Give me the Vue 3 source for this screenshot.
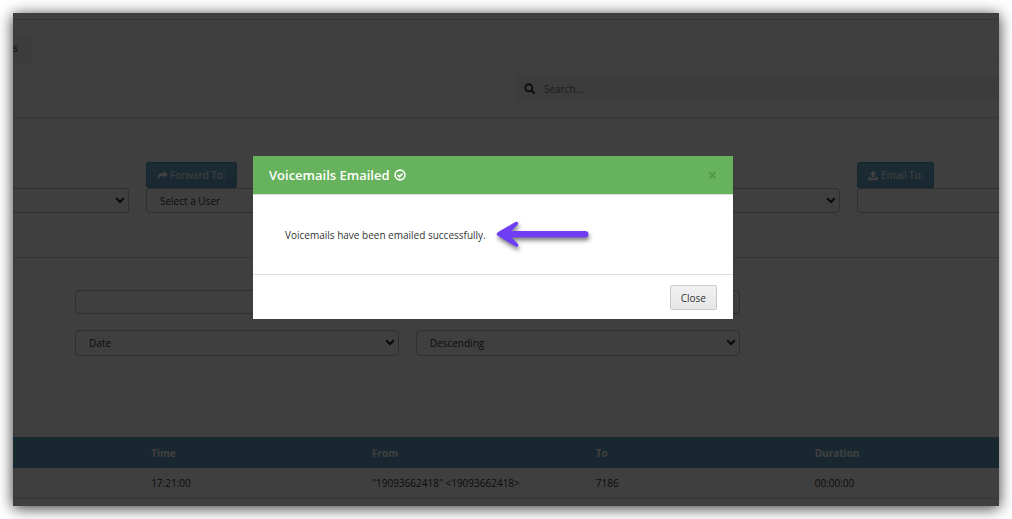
<script setup>
import { ref } from 'vue'

const forwardUser = ref('user')
const sortBy = ref('date')
const order = ref('desc')
const open = ref(true)

const columns = ['', 'Time', 'From', 'To', 'Duration']
const rows = [['', '17:21:00', '"19093662418" <19093662418>', '7186', '00:00:00']]
</script>

<template>
  <div class="window">
    <div class="page">
      <div class="topbar"></div>
      <nav class="tabs"><a class="tab" href="#">s</a></nav>
      <div class="search-row">
        <label class="search">
          <svg class="icon" viewBox="0 0 12 12" aria-hidden="true">
            <circle cx="4.800" cy="4.800" r="3.500" fill="none" stroke="currentColor" stroke-width="1.900" />
            <path d="M7.500 7.500 10 10" stroke="currentColor" stroke-width="2.100" stroke-linecap="round" />
          </svg>
          <input type="search" placeholder="Search..." aria-label="Search" />
        </label>
      </div>

      <section class="actions">
        <div class="field first">
          <div class="select">
            <select aria-label="Action"><option></option></select>
            <svg class="chevron" viewBox="0 0 10 7" aria-hidden="true"><path d="M1.200 1.300 5 5 8.800 1.300" /></svg>
          </div>
        </div>
        <div class="field">
          <button class="primary" type="button">
            <svg class="glyph" viewBox="0 0 12 12" aria-hidden="true">
              <path d="M7.200 1.200 11.800 4.900 7.200 8.500V6.500C4.200 6.300 2.200 7 1.700 10.800.2 8.400-.2 3.200 7.200 3.200Z" fill="currentColor" />
            </svg>
            Forward To:
          </button>
          <div class="select">
            <select v-model="forwardUser" aria-label="Forward to">
              <option value="user">Select a User</option>
            </select>
          </div>
        </div>
        <div class="field">
          <div class="select">
            <select aria-label="Folder"><option></option></select>
            <svg class="chevron" viewBox="0 0 10 7" aria-hidden="true"><path d="M1.200 1.300 5 5 8.800 1.300" /></svg>
          </div>
        </div>
        <div class="field last">
          <button class="primary" type="button">
            <svg class="glyph" viewBox="0 0 12 12" aria-hidden="true">
              <path d="M5.500 .8 9.200 4.600H7V8H4V4.600H1.800ZM.8 8H3.200V9H7.800V8H10.200Q11 8 11 8.700V10.700Q11 11.300 10.300 11.300H.7Q0 11.300 0 10.700V8.700Q0 8 .8 8Z" fill="currentColor" />
            </svg>
            Email To:
          </button>
          <input class="text" type="email" aria-label="Email to" />
        </div>
      </section>

      <section class="filters">
        <input class="text wide" type="text" aria-label="Filter" />
        <div class="select">
          <select v-model="sortBy" aria-label="Sort by"><option value="date">Date</option></select>
          <svg class="chevron" viewBox="0 0 10 7" aria-hidden="true"><path d="M1.200 1.300 5 5 8.800 1.300" /></svg>
        </div>
        <div class="select">
          <select v-model="order" aria-label="Order"><option value="desc">Descending</option></select>
          <svg class="chevron" viewBox="0 0 10 7" aria-hidden="true"><path d="M1.200 1.300 5 5 8.800 1.300" /></svg>
        </div>
      </section>

      <table>
        <colgroup>
          <col class="c-lead" /><col class="c-time" /><col class="c-from" /><col class="c-to" /><col />
        </colgroup>
        <thead>
          <tr><th v-for="c in columns" :key="c" scope="col">{{ c }}</th></tr>
        </thead>
        <tbody>
          <tr v-for="(r, i) in rows" :key="i"><td v-for="(v, j) in r" :key="j">{{ v }}</td></tr>
        </tbody>
      </table>
    </div>

    <div v-if="open" class="backdrop">
      <div class="modal" role="dialog" aria-modal="true" aria-labelledby="dialog-title">
        <header>
          <h2 id="dialog-title">
            Voicemails Emailed
            <svg class="check" viewBox="0 0 12 12" aria-hidden="true">
              <circle cx="6" cy="6" r="4.900" fill="none" stroke="currentColor" stroke-width="1.600" />
              <path d="M3.600 5.900 5.400 7.700 8.500 4.600" fill="none" stroke="currentColor" stroke-width="1.700" />
            </svg>
          </h2>
          <button class="dismiss" type="button" aria-label="Dismiss" @click="open = false">×</button>
        </header>
        <div class="body">
          <p>Voicemails have been emailed successfully.</p>
          <svg class="arrow" viewBox="0 0 98 32" aria-hidden="true">
            <path d="M1.500 15 Q2 13.500 4 12.500L20 3.200Q22.500 2.200 23.200 4 23.500 5 22.500 6L16.500 12H90Q93.500 12 93.500 15.200T90 18.500H16.500L22.500 24.500Q23.800 26 23 27.200 22 28.500 20 27.300L4 17.600Q2 16.600 1.500 15Z" fill="#6f3df4" />
          </svg>
        </div>
        <footer><button class="close" type="button" @click="open = false">Close</button></footer>
      </div>
    </div>
  </div>
</template>

<style>
body {
  background: #fff;
}
</style>

<style scoped>
* {
  box-sizing: border-box;
}
.window {
  position: relative;
  margin: 13px;
  overflow: hidden;
  box-shadow: 0 2px 14px rgba(0, 0, 0, 0.8);
  font: 10px/16px "Open Sans", sans-serif;
  color: #333;
}
.page {
  background: #fcfcfc;
  padding-bottom: 7px;
}
button,
input,
select {
  font: inherit;
  color: inherit;
  margin: 0;
}
.topbar {
  height: 7px;
  border-bottom: 1px solid #d8d8d8;
}
.tabs {
  display: flex;
  padding-top: 14px;
  height: 43px;
  border-bottom: 1px solid #f0f0f0;
}
.tab {
  width: 19px;
  height: 28px;
  line-height: 28px;
  background: #f0f0f0;
  color: #333;
  text-decoration: none;
}
.search-row {
  display: flex;
  justify-content: flex-end;
  padding: 13px 0 16px;
  border-bottom: 1px solid #dcdcdc;
}
.search {
  display: flex;
  align-items: center;
  gap: 8px;
  width: 49%;
  height: 25px;
  padding-left: 8px;
  background: #f0f0f0;
  border-radius: 3px 0 0 3px;
}
.icon {
  width: 12px;
  height: 12px;
  color: #333;
}
.search input {
  flex: 1;
  border: 0;
  padding: 0;
  background: none;
}
.search input::placeholder {
  color: #777;
  opacity: 1;
}
.actions {
  display: grid;
  grid-template-columns: 116fr 339fr 338fr 142fr;
  gap: 17px;
  align-items: end;
  padding: 44px 0;
  border-bottom: 1px solid #d0d0d0;
}
.field {
  min-width: 0;
}
.primary {
  display: flex;
  align-items: center;
  gap: 2px;
  height: 26px;
  padding: 0 10px;
  border: 1px solid #5a98b8;
  border-radius: 2px;
  background: linear-gradient(#70b0cc, #64a0c0);
  color: #fff;
}
.glyph {
  width: 11px;
  height: 11px;
}
.select {
  position: relative;
}
select,
.text {
  display: block;
  width: 100%;
  height: 26px;
  padding: 0 13px;
  border: 1px solid #bbb;
  border-radius: 4px;
  background: #fcfcfc;
  appearance: none;
}
.actions select,
.actions .text {
  height: 25px;
}
.first select {
  border-left: 0;
  border-radius: 0 4px 4px 0;
}
.last .text {
  border-right: 0;
  border-radius: 4px 0 0 4px;
}
.chevron {
  position: absolute;
  right: 4px;
  top: 9px;
  width: 10px;
  height: 7px;
  fill: none;
  stroke: #222;
  stroke-width: 2;
}
.filters {
  display: grid;
  grid-template-columns: 1fr 1fr;
  gap: 16px 17px;
  width: 73.7%;
  padding: 32px 0 81px 62px;
}
.wide {
  grid-column: span 2;
  height: 24px;
}
table {
  width: 100%;
  table-layout: fixed;
  border-collapse: collapse;
}
.c-lead {
  width: 13.2%;
}
.c-time {
  width: 22.4%;
}
.c-from {
  width: 22.7%;
}
.c-to {
  width: 22.2%;
}
th,
td {
  height: 31px;
  padding: 0 8px;
  text-align: left;
}
th {
  background: #64a0c0;
  color: #fcfcfc;
  font-weight: 700;
}
td {
  height: 30px;
  border-bottom: 1px solid #dcdcdc;
}
.backdrop {
  position: absolute;
  inset: 0;
  display: flex;
  align-items: flex-start;
  justify-content: center;
  padding: 143px 26px 0 0;
  background: rgba(0, 0, 0, 0.75);
}
.modal {
  width: 480px;
  background: #fff;
  color: #333;
}
header {
  display: flex;
  align-items: center;
  justify-content: space-between;
  height: 39px;
  padding: 0 16px;
  background: #67b25c;
  border-bottom: 1px solid #ddd;
}
h2 {
  display: flex;
  align-items: center;
  gap: 4px;
  margin: 0;
  font-size: 13px;
  font-weight: 600;
  color: #fff;
}
.check {
  width: 12px;
  height: 12px;
}
.dismiss {
  padding: 0;
  border: 0;
  background: none;
  font-size: 16px;
  font-weight: 600;
  color: #539149;
}
.body {
  display: flex;
  align-items: center;
  gap: 9px;
  height: 79px;
  padding: 0 32px;
}
p {
  margin: 0;
}
.arrow {
  width: 98px;
  height: 32px;
  filter: drop-shadow(1px 3px 2px rgba(0, 0, 0, 0.5));
}
footer {
  display: flex;
  justify-content: flex-end;
  padding: 10px 16px 9px;
  border-top: 1px solid #ddd;
}
.close {
  height: 25px;
  padding: 0 10px;
  border: 1px solid #c8c8c8;
  border-radius: 2px;
  background: linear-gradient(#f2f2f2, #e6e6e6);
}
</style>
